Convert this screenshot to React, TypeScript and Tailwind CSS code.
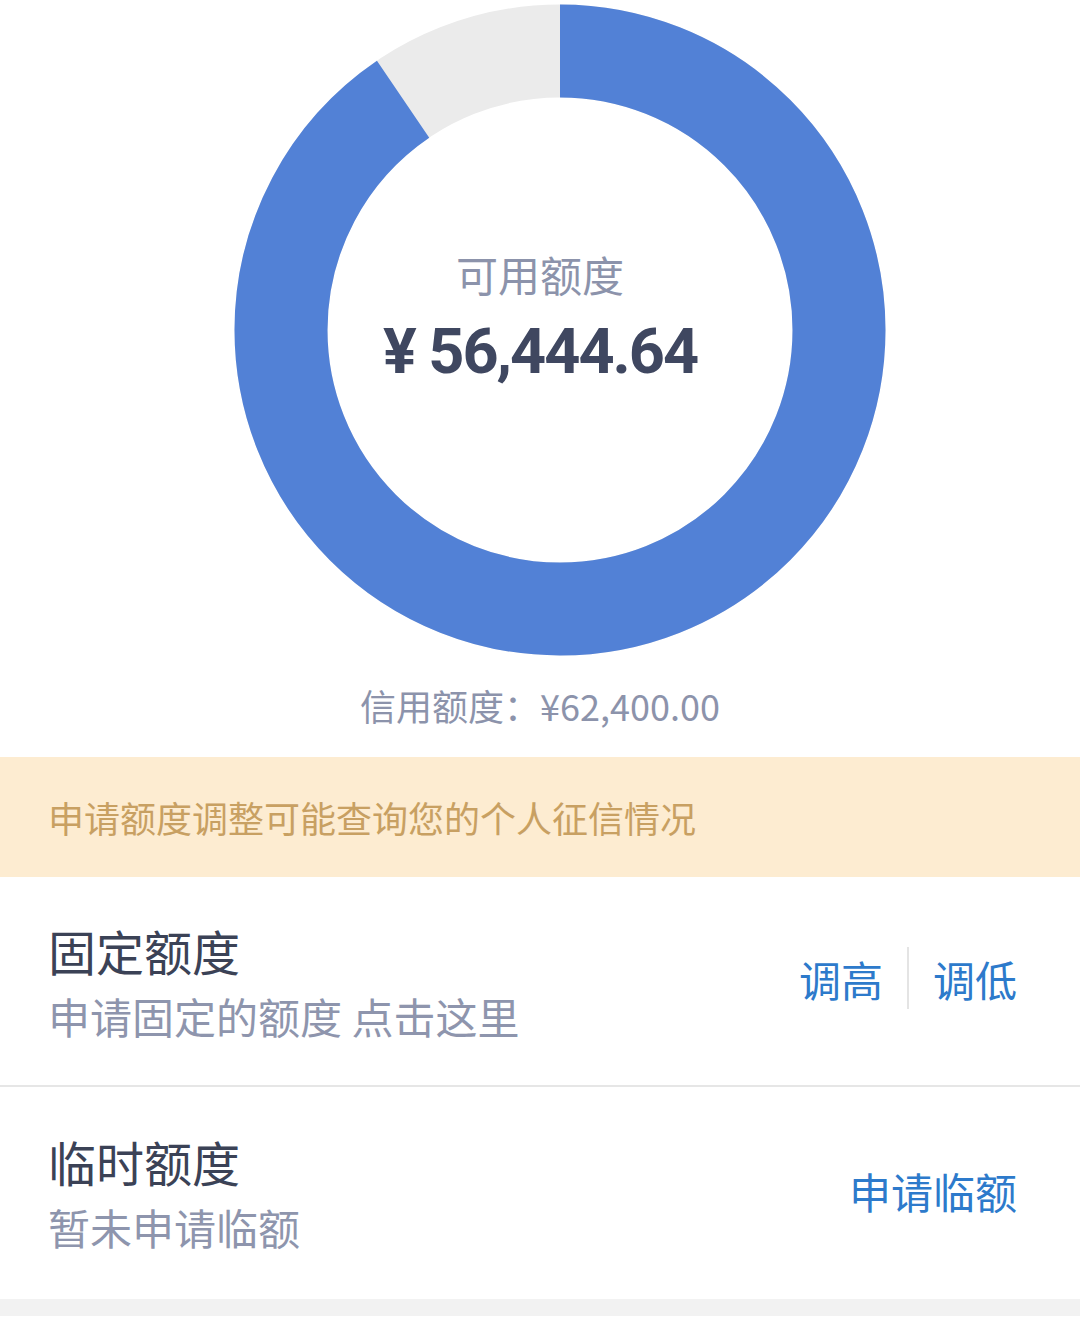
const CJK = "font-['Noto_Sans_CJK_SC','Noto_Sans',sans-serif]";

function Donut() {
  const total = 62400;
  const available = 56444.64;
  const r = 279;
  const c = 2 * Math.PI * r;
  const used = ((total - available) / total) * c;

  return (
    <div className="relative h-[660px] w-full">
      <svg width="1080" height="660" viewBox="0 0 1080 660" className="block">
        <circle cx="560" cy="330" r={r} fill="none" stroke="#ebebeb" strokeWidth="93" />
        <circle
          cx="560"
          cy="330"
          r={r}
          fill="none"
          stroke="#5281d6"
          strokeWidth="93"
          strokeDasharray={`${c - used} ${c}`}
          transform="rotate(-90 560 330)"
        />
      </svg>
      <div className="absolute left-0 right-0 top-[248px] flex flex-col items-center">
        <div className={`${CJK} text-[42px] leading-[52px] text-[#8c93ab]`}>可用额度</div>
        <div className="mt-[14px] font-['Roboto',sans-serif] text-[63px] font-bold leading-[76px] tracking-[-2px] text-[#3f4760]">
          ¥ 56,444.64
        </div>
      </div>
    </div>
  );
}

export default function App() {
  return (
    <div className={`${CJK} w-[1080px] h-[1343px] bg-white overflow-hidden`}>
      <Donut />

      <div className="flex h-[97px] items-center justify-center pb-[7px] text-[36px] text-[#8c93ab]">
        信用额度：¥62,400.00
      </div>

      <div className="flex h-[120px] items-center bg-[#fdecd1] pl-[48px] text-[36px] text-[#c8a062]">
        申请额度调整可能查询您的个人征信情况
      </div>

      <div className="flex h-[208px] items-start justify-between pl-[48px] pr-[63px]">
        <div className="flex flex-col pt-[44px]">
          <div className="text-[48px] leading-[58px] text-[#3b4256]">固定额度</div>
          <div className="mt-[8px] text-[42px] leading-[58px] text-[#8e95ad]">申请固定的额度 点击这里</div>
        </div>
        <div className="flex items-center self-center pb-[6px] text-[42px] text-[#2d7acb]">
          <span>调高</span>
          <span className="mx-[24px] h-[62px] w-[2px] bg-[#e4e4e4]" />
          <span>调低</span>
        </div>
      </div>

      <div className="h-[2px] bg-[#e6e6e6]" />

      <div className="flex h-[212px] items-start justify-between pl-[48px] pr-[63px]">
        <div className="flex flex-col pt-[45px]">
          <div className="text-[48px] leading-[58px] text-[#3b4256]">临时额度</div>
          <div className="mt-[8px] text-[42px] leading-[58px] text-[#8e95ad]">暂未申请临额</div>
        </div>
        <div className="self-center pb-[5px] text-[42px] text-[#2d7acb]">申请临额</div>
      </div>

      <div className="h-[17px] bg-[#f2f2f2]" />
    </div>
  );
}
